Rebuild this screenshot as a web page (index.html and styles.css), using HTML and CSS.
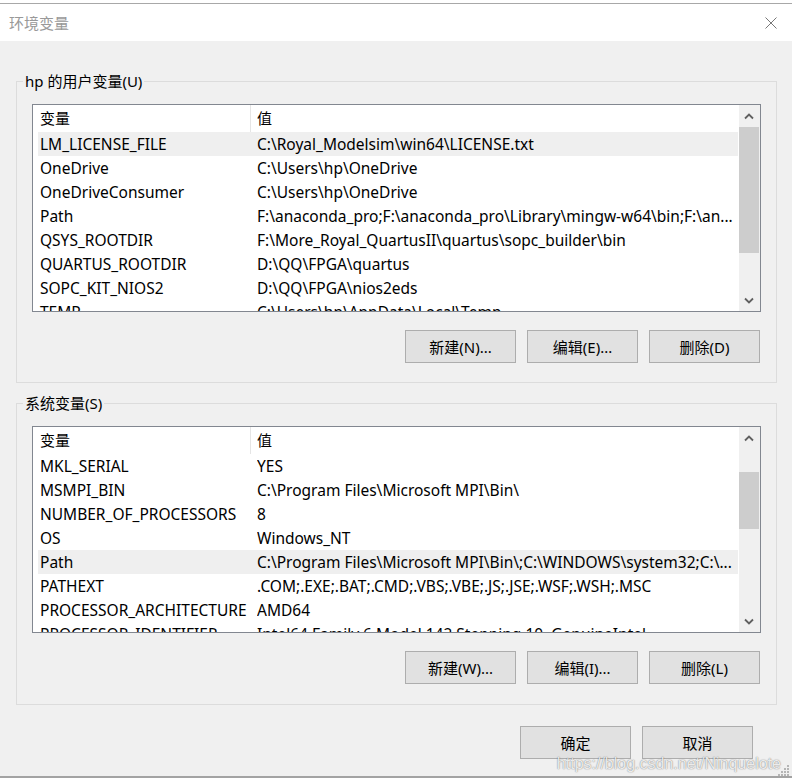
FILE: index.html
```html
<!DOCTYPE html>
<html lang="zh-CN">
<head>
  <meta charset="UTF-8">
  <meta name="viewport" content="width=device-width, initial-scale=1.0">
  <link rel="stylesheet" href="styles.css">
  <title>环境变量</title>
</head>
<body class="page">
  <div class="window">
    <header class="titlebar">
      <span class="titlebar__text">环境变量</span>
      <svg class="titlebar__close" width="12" height="12" viewBox="0 0 12 12" aria-label="关闭">
        <path d="M0.5 0.5 L11.5 11.5 M11.5 0.5 L0.5 11.5" stroke="#777" stroke-width="1" fill="none"/>
      </svg>
    </header>

    <main class="content">
      <fieldset class="group">
        <legend class="group__title">hp 的用户变量(U)</legend>
        <div class="list">
          <div class="list__view">
            <div class="list__head">
              <div class="list__cell list__cell_name">变量</div>
              <div class="list__cell list__cell_value">值</div>
            </div>
            <div class="list__row list__row_selected">
              <div class="list__name">LM_LICENSE_FILE</div>
              <div class="list__value">C:\Royal_Modelsim\win64\LICENSE.txt</div>
            </div>
            <div class="list__row">
              <div class="list__name">OneDrive</div>
              <div class="list__value">C:\Users\hp\OneDrive</div>
            </div>
            <div class="list__row">
              <div class="list__name">OneDriveConsumer</div>
              <div class="list__value">C:\Users\hp\OneDrive</div>
            </div>
            <div class="list__row">
              <div class="list__name">Path</div>
              <div class="list__value">F:\anaconda_pro;F:\anaconda_pro\Library\mingw-w64\bin;F:\an...</div>
            </div>
            <div class="list__row">
              <div class="list__name">QSYS_ROOTDIR</div>
              <div class="list__value">F:\More_Royal_QuartusII\quartus\sopc_builder\bin</div>
            </div>
            <div class="list__row">
              <div class="list__name">QUARTUS_ROOTDIR</div>
              <div class="list__value">D:\QQ\FPGA\quartus</div>
            </div>
            <div class="list__row">
              <div class="list__name">SOPC_KIT_NIOS2</div>
              <div class="list__value">D:\QQ\FPGA\nios2eds</div>
            </div>
            <div class="list__row">
              <div class="list__name">TEMP</div>
              <div class="list__value">C:\Users\hp\AppData\Local\Temp</div>
            </div>
          </div>
          <div class="scrollbar">
            <div class="scrollbar__arrow">
              <svg width="10" height="7" viewBox="0 0 10 7"><path d="M1 5.5 L5 1.5 L9 5.5" stroke="#606060" stroke-width="1.8" fill="none"/></svg>
            </div>
            <div class="scrollbar__track">
              <div class="scrollbar__thumb" style="height: 126px; margin-top: 0;"></div>
            </div>
            <div class="scrollbar__arrow">
              <svg width="10" height="7" viewBox="0 0 10 7"><path d="M1 1.5 L5 5.5 L9 1.5" stroke="#606060" stroke-width="1.8" fill="none"/></svg>
            </div>
          </div>
        </div>
        <div class="buttons">
          <button class="button">新建(N)...</button>
          <button class="button">编辑(E)...</button>
          <button class="button">删除(D)</button>
        </div>
      </fieldset>

      <fieldset class="group group_system">
        <legend class="group__title">系统变量(S)</legend>
        <div class="list">
          <div class="list__view">
            <div class="list__head">
              <div class="list__cell list__cell_name">变量</div>
              <div class="list__cell list__cell_value">值</div>
            </div>
            <div class="list__row">
              <div class="list__name">MKL_SERIAL</div>
              <div class="list__value">YES</div>
            </div>
            <div class="list__row">
              <div class="list__name">MSMPI_BIN</div>
              <div class="list__value">C:\Program Files\Microsoft MPI\Bin\</div>
            </div>
            <div class="list__row">
              <div class="list__name">NUMBER_OF_PROCESSORS</div>
              <div class="list__value">8</div>
            </div>
            <div class="list__row">
              <div class="list__name">OS</div>
              <div class="list__value">Windows_NT</div>
            </div>
            <div class="list__row list__row_selected">
              <div class="list__name">Path</div>
              <div class="list__value">C:\Program Files\Microsoft MPI\Bin\;C:\WINDOWS\system32;C:\...</div>
            </div>
            <div class="list__row">
              <div class="list__name">PATHEXT</div>
              <div class="list__value">.COM;.EXE;.BAT;.CMD;.VBS;.VBE;.JS;.JSE;.WSF;.WSH;.MSC</div>
            </div>
            <div class="list__row">
              <div class="list__name">PROCESSOR_ARCHITECTURE</div>
              <div class="list__value">AMD64</div>
            </div>
            <div class="list__row">
              <div class="list__name">PROCESSOR_IDENTIFIER</div>
              <div class="list__value">Intel64 Family 6 Model 142 Stepping 10, GenuineIntel</div>
            </div>
          </div>
          <div class="scrollbar">
            <div class="scrollbar__arrow">
              <svg width="10" height="7" viewBox="0 0 10 7"><path d="M1 5.5 L5 1.5 L9 5.5" stroke="#606060" stroke-width="1.8" fill="none"/></svg>
            </div>
            <div class="scrollbar__track">
              <div class="scrollbar__thumb" style="height: 57px; margin-top: 23px;"></div>
            </div>
            <div class="scrollbar__arrow">
              <svg width="10" height="7" viewBox="0 0 10 7"><path d="M1 1.5 L5 5.5 L9 1.5" stroke="#606060" stroke-width="1.8" fill="none"/></svg>
            </div>
          </div>
        </div>
        <div class="buttons">
          <button class="button">新建(W)...</button>
          <button class="button">编辑(I)...</button>
          <button class="button">删除(L)</button>
        </div>
      </fieldset>

      <div class="buttons buttons_footer">
        <button class="button">确定</button>
        <button class="button">取消</button>
      </div>
    </main>

    <div class="watermark">https://blog.csdn.net/Ninquelote</div>
    <svg class="grip" width="12" height="12" viewBox="0 0 12 12">
      <rect x="9" y="0" width="2" height="2" fill="#b5b5b5"/>
      <rect x="6" y="3" width="2" height="2" fill="#b5b5b5"/>
      <rect x="9" y="3" width="2" height="2" fill="#b5b5b5"/>
      <rect x="3" y="6" width="2" height="2" fill="#b5b5b5"/>
      <rect x="6" y="6" width="2" height="2" fill="#b5b5b5"/>
      <rect x="9" y="6" width="2" height="2" fill="#b5b5b5"/>
      <rect x="0" y="9" width="2" height="2" fill="#b5b5b5"/>
      <rect x="3" y="9" width="2" height="2" fill="#b5b5b5"/>
      <rect x="6" y="9" width="2" height="2" fill="#b5b5b5"/>
      <rect x="9" y="9" width="2" height="2" fill="#b5b5b5"/>
    </svg>
  </div>
</body>
</html>
```

FILE: styles.css
```css
html, .page {
  margin: 0;
  background: #fff;
  font-family: 'Noto Sans', 'Noto Sans CJK SC', sans-serif;
  font-size: 15px;
  color: #000;
}

* {
  box-sizing: border-box;
}

.window {
  position: relative;
  width: 792px;
  height: 780px;
  overflow: hidden;
}

.titlebar {
  display: flex;
  justify-content: space-between;
  align-items: center;
  height: 38px;
  margin-top: 3px;
  padding: 0 15px 0 9px;
  border-top: 1px solid #a8a8a8;
  background: #fff;
}

.titlebar__text {
  color: #999;
  line-height: 20px;
}

.content {
  display: flex;
  flex-direction: column;
  height: 737px;
  padding-top: 31px;
  background: #f0f0f0;
  border-bottom: 2px solid #a3a3a3;
}

.group {
  margin: 0 15px 0 16px;
  padding: 13px 15px 19px;
  border: 1px solid #dcdcdc;
  min-width: 0;
}

.group_system {
  margin-top: 11px;
  padding-bottom: 20px;
}

.group__title {
  margin-left: -9px;
  padding: 0 2px;
  line-height: 19px;
}

.list {
  display: flex;
  height: 208px;
  border: 1px solid #828790;
  background: #fff;
  font-size: 15.5px;
}

.group_system .list {
  height: 207px;
}

.list__view {
  flex: 1;
  min-width: 0;
  overflow: hidden;
}

.list__head {
  display: flex;
  height: 27px;
  line-height: 27px;
  font-size: 15px;
}

.list__cell_name {
  width: 218px;
  padding-left: 7px;
  border-right: 1px solid #e5e5e5;
}

.list__cell_value {
  padding-left: 6px;
}

.list__row {
  display: flex;
  height: 24px;
  line-height: 24px;
  margin: 0 1px 0 5px;
  white-space: nowrap;
}

.list__row_selected {
  background: #efefef;
}

.list__name {
  flex: none;
  width: 219px;
  padding-left: 2px;
  overflow: hidden;
}

.list__value {
  flex: 1;
  min-width: 0;
  overflow: hidden;
  text-overflow: ellipsis;
}

.scrollbar {
  display: flex;
  flex-direction: column;
  width: 21px;
  background: #f0f0f0;
}

.scrollbar__arrow {
  display: flex;
  justify-content: center;
  align-items: center;
  height: 22px;
  padding-right: 1px;
}

.scrollbar__track {
  flex: 1;
}

.scrollbar__thumb {
  width: 20px;
  background: #cdcdcd;
}

.buttons {
  display: flex;
  justify-content: flex-end;
  gap: 11px;
  margin-top: 18px;
  padding-right: 1px;
}

.buttons_footer {
  margin-top: 21px;
  padding-right: 39px;
}

.button {
  width: 111px;
  height: 33px;
  padding: 0;
  border: 1px solid #adadad;
  background: #e1e1e1;
  font-family: inherit;
  font-size: 15px;
  color: #000;
}

.watermark {
  position: absolute;
  right: 11px;
  bottom: 7px;
  font-family: 'Liberation Sans', sans-serif;
  font-size: 16px;
  color: rgba(255, 255, 255, 0.85);
  text-shadow: 0 0 1px rgba(0, 0, 0, 0.45), 0 0 2px rgba(0, 0, 0, 0.2);
}

.grip {
  position: absolute;
  right: 2px;
  bottom: 3px;
}
```
